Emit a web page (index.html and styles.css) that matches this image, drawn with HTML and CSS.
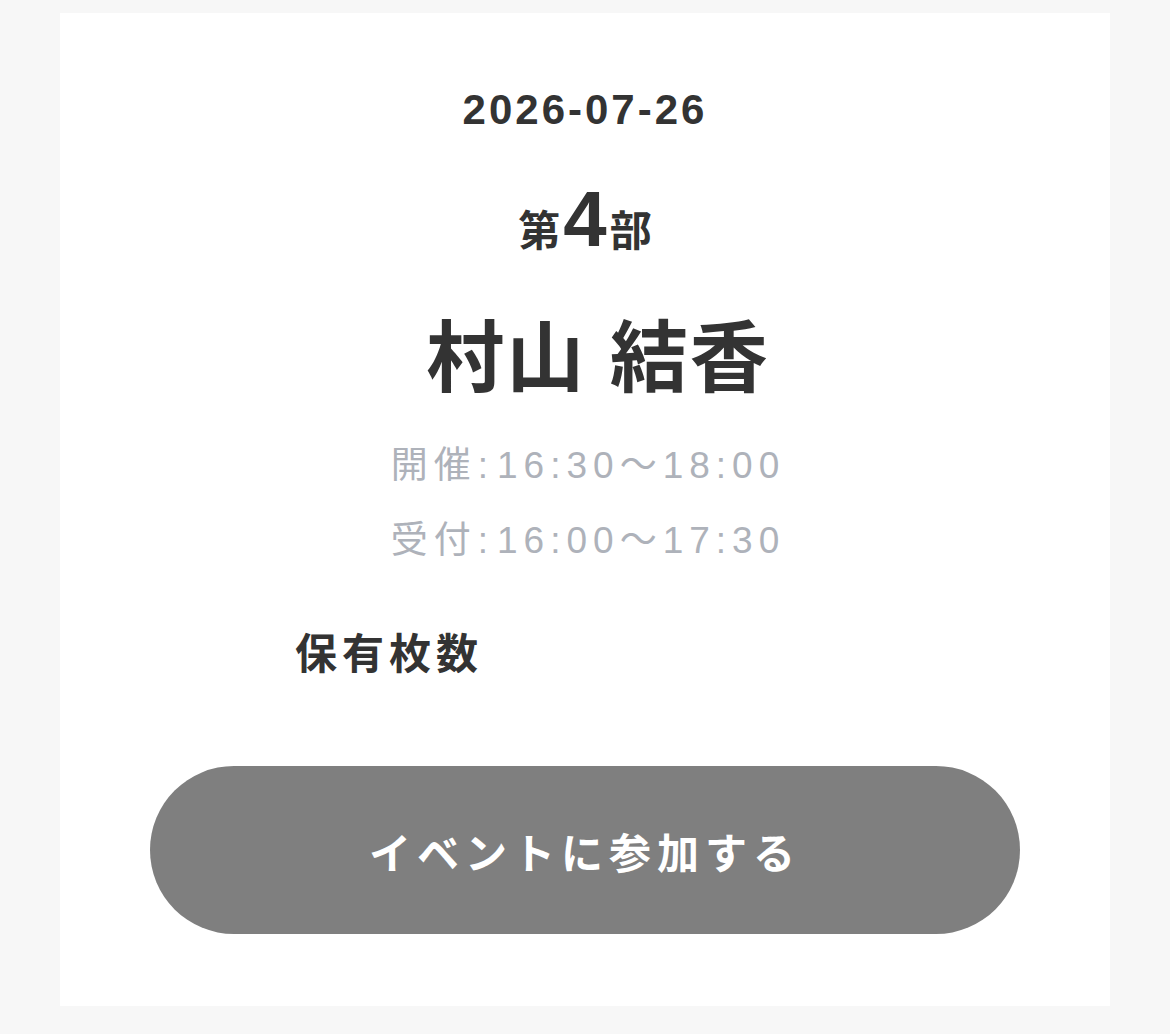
FILE: index.html
```html
<!DOCTYPE html>
<html lang="ja">
<head>
    <meta charset="UTF-8">
    <meta name="viewport" content="width=device-width, initial-scale=1.0">
    <title>イベント詳細</title>
    <link rel="stylesheet" href="styles.css">
</head>
<body>
    <div class="card">
        <div class="date">2026-07-26</div>
        <div class="part">第<span class="part-num">4</span>部</div>
        <div class="name">村山 結香</div>
        <div class="times">
            <div class="time-row">開催<span class="time-sep">:</span>16:30〜18:00</div>
            <div class="time-row">受付<span class="time-sep">:</span>16:00〜17:30</div>
        </div>
        <div class="holding">保有枚数</div>
        <button class="join-btn" type="button">イベントに参加する</button>
    </div>
</body>
</html>
```

FILE: styles.css
```css
body {
    margin: 0;
    background-color: #f7f7f7;
    font-family: "Liberation Sans", "Noto Sans CJK JP", sans-serif;
    color: #333333;
}
.card {
    background: white;
    margin: 13px 60px 0;
    height: 993px;
    padding-top: 72px;
    box-sizing: border-box;
    text-align: center;
}
.date {
    font-size: 42px;
    line-height: 50px;
    font-weight: bold;
    letter-spacing: 3px;
}
.part {
    margin-top: 44px;
    font-size: 42px;
    line-height: 80px;
    font-weight: bold;
}
.part-num {
    font-size: 78px;
    margin: 0 3px;
}
.name {
    margin-top: 37px;
    padding-left: 26px;
    font-size: 78px;
    line-height: 100px;
    font-weight: bold;
    letter-spacing: 2px;
}
.times {
    margin-top: 19px;
    padding-left: 6px;
    color: #aeb2ba;
    font-size: 37px;
    letter-spacing: 6px;
}
.time-row {
    line-height: 75px;
}
.time-sep {
    margin: 0 3px 0 1px;
}
.holding {
    margin-top: 47px;
    padding-left: 235px;
    text-align: left;
    font-size: 42px;
    line-height: 60px;
    font-weight: bold;
    letter-spacing: 5px;
}
.join-btn {
    display: block;
    margin: 81px 90px 0;
    width: calc(100% - 180px);
    height: 168px;
    border: none;
    border-radius: 84px;
    background-color: #7f7f7f;
    color: white;
    font-family: "Liberation Sans", "Noto Sans CJK JP", sans-serif;
    font-size: 42px;
    font-weight: bold;
    letter-spacing: 6px;
    cursor: pointer;
}
```
